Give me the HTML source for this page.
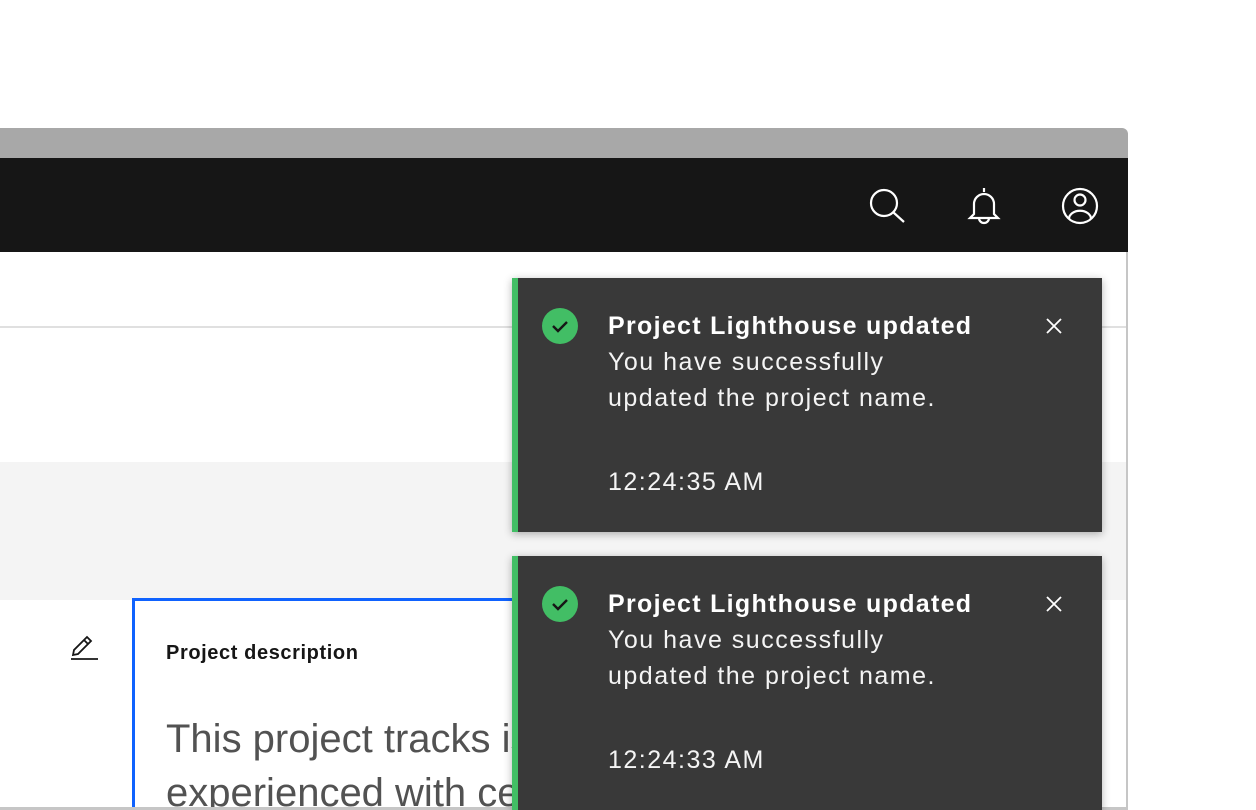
<!DOCTYPE html>
<html style="width:1256px;height:810px;overflow:hidden"><head><meta charset="utf-8"><style>
*{margin:0;padding:0;box-sizing:border-box}
body{width:1256px;height:810px;background:#fff;position:relative;overflow:hidden;font-family:"Liberation Sans",sans-serif}
.abs{position:absolute}
.toast{position:absolute;left:512px;width:590px;background:#393939;border-left:6px solid #42be65;box-shadow:0 2px 8px rgba(0,0,0,.3);color:#f4f4f4;overflow:hidden}
.toast .t{position:absolute;left:90px;top:34px;font-weight:bold;font-size:25px;line-height:28px;color:#fff;letter-spacing:1.3px;white-space:nowrap}
.toast .b{position:absolute;left:90px;top:66px;font-size:25px;line-height:36px;letter-spacing:1.5px;white-space:nowrap}
.toast .tm{position:absolute;left:90px;top:188px;font-size:25px;line-height:32px;letter-spacing:1.5px}
</style></head><body>
<div class="abs" style="left:0;top:128px;width:1128px;height:30px;background:#a8a8a8;border-top-right-radius:6px"></div>
<div class="abs" style="left:0;top:158px;width:1128px;height:94px;background:#161616"></div>
<svg class="abs" style="left:860px;top:180px" width="250" height="52" viewBox="860 180 250 52" fill="none" stroke="#fff" stroke-width="2.2">
<circle cx="884" cy="203" r="13"/><line x1="893.5" y1="212.5" x2="904" y2="222"/>
<path d="M984 188v4M974 214v-10a10 10 0 0 1 20 0v10l4 4h-28z"/><path d="M979 218a5 5 0 0 0 10 0"/>
<circle cx="1080" cy="206" r="17"/><circle cx="1080" cy="200" r="5.5"/><path d="M1069 219a8 6 0 0 1 22 0"/>
</svg>
<div class="abs" style="left:1126px;top:252px;width:2px;height:558px;background:#c6c6c6"></div>
<div class="abs" style="left:0;top:326px;width:1126px;height:2px;background:#e0e0e0"></div>
<div class="abs" style="left:0;top:462px;width:1126px;height:138px;background:#f4f4f4"></div>
<div class="abs" style="left:132px;top:598px;width:420px;height:220px;border:3px solid #0f62fe;border-right:none"></div>
<svg class="abs" style="left:66px;top:630px" width="36" height="34" viewBox="0 0 36 34" fill="none" stroke="#161616" stroke-width="1.8">
<path d="M5 29h27"/><path d="M7 25l1-5 13-13 4 4-13 13z M18 10l4 4"/>
</svg>
<div class="abs" style="left:166px;top:642px;font-size:20px;font-weight:bold;color:#161616;letter-spacing:0.6px">Project description</div>
<div class="abs" style="left:166px;top:712px;font-size:40px;line-height:54px;color:#525252;white-space:nowrap">This project tracks issues<br>experienced with certain</div>
<div class="abs" style="left:0;top:807px;width:1128px;height:3px;background:#c6c6c6"></div>

<div class="toast" style="top:278px;height:254px">
<svg class="abs" style="left:24px;top:30px" width="36" height="36" viewBox="0 0 36 36"><circle cx="18" cy="18" r="18" fill="#42be65"/><path d="M11 18l5 5 9-9" fill="none" stroke="#161616" stroke-width="2.4"/></svg>
<div class="t">Project Lighthouse updated</div>
<div class="b">You have successfully<br>updated the project name.</div>
<div class="tm">12:24:35 AM</div>
<svg class="abs" style="left:528px;top:40px" width="16" height="16" viewBox="0 0 16 16" stroke="#fff" stroke-width="1.8"><path d="M1 1l14 14M15 1L1 15"/></svg>
</div>
<div class="toast" style="top:556px;height:254px">
<svg class="abs" style="left:24px;top:30px" width="36" height="36" viewBox="0 0 36 36"><circle cx="18" cy="18" r="18" fill="#42be65"/><path d="M11 18l5 5 9-9" fill="none" stroke="#161616" stroke-width="2.4"/></svg>
<div class="t">Project Lighthouse updated</div>
<div class="b">You have successfully<br>updated the project name.</div>
<div class="tm">12:24:33 AM</div>
<svg class="abs" style="left:528px;top:40px" width="16" height="16" viewBox="0 0 16 16" stroke="#fff" stroke-width="1.8"><path d="M1 1l14 14M15 1L1 15"/></svg>
</div>
</body></html>
